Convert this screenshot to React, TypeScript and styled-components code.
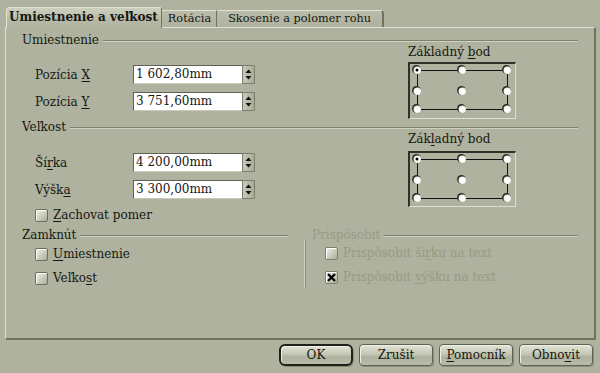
import React from "react";
import styled, { createGlobalStyle } from "styled-components";

const Global = createGlobalStyle`
  html, body { margin: 0; padding: 0; background: #aeb29e; }
  body { font-family: "DejaVu Serif", "Liberation Serif", serif; font-size: 12px; color: #161712; }
  * { box-sizing: border-box; }
`;

const Window = styled.div`
  width: 600px;
  height: 373px;
  padding: 7px 4px 0 5px;
  display: flex;
  flex-direction: column;
  background: #aeb29e;
`;

const TabBar = styled.div`
  display: flex;
  align-items: flex-end;
  height: 20px;
  padding-left: 1px;
  position: relative;
  z-index: 2;
`;

const Tab = styled.div<{ $active?: boolean; $last?: boolean }>`
  height: ${(p) => (p.$active ? 21 : 17)}px;
  margin-bottom: ${(p) => (p.$active ? -1 : 0)}px;
  padding: ${(p) => (p.$active ? "0 3px 0 2px" : p.$last ? "0 11px 0 10px" : "0 5px 0 5px")};
  display: flex;
  align-items: center;
  padding-bottom: ${(p) => (p.$active ? 3 : 1)}px;
  font-weight: ${(p) => (p.$active ? "bold" : "normal")};
  font-size: ${(p) => (p.$active ? 12 : 11.3)}px;
  white-space: nowrap;
  background: ${(p) =>
    p.$active ? "linear-gradient(#cdd0be, #b6baa6 60%, #aeb29e)" : "linear-gradient(#b9bca9, #aeb29e)"};
  border-top: 1px solid #dfe2d2;
  border-left: 1px solid ${(p) => (p.$active ? "#e2e5d6" : "transparent")};
  border-right: ${(p) => (p.$last ? 2 : 1)}px solid #6f735f;
  border-radius: ${(p) => (p.$active ? "4px 2px 0 0" : p.$last ? "0 4px 0 0" : "0")};
`;

const Panel = styled.div`
  height: 313px;
  border-top: 1px solid #dfe2d2;
  border-left: 1px solid #dfe2d2;
  border-right: 2px solid #6e725e;
  border-bottom: 2px solid #6e725e;
  padding: 6px 16px 0 16px;
  display: flex;
  flex-direction: column;
`;

const Header = styled.div<{ $disabled?: boolean; $gapRight?: number }>`
  display: flex;
  align-items: center;
  height: 12px;
  line-height: 12px;
  gap: 4px;
  margin-right: ${(p) => p.$gapRight ?? 0}px;
  color: ${(p) => (p.$disabled ? "#979b86" : "inherit")};
`;

const Rule = styled.div`
  flex: 1;
  height: 2px;
  border-top: 1px solid #7e826e;
  border-bottom: 1px solid #cfd2c0;
  margin-top: 1px;
`;

const Body = styled.div<{ $pb?: number }>`
  display: grid;
  grid-template-columns: 386px 110px;
  padding-bottom: ${(p) => p.$pb ?? 0}px;
`;

const Fields = styled.div<{ $pt: number }>`
  padding: ${(p) => p.$pt}px 0 0 13px;
  display: flex;
  flex-direction: column;
  gap: 8px;
`;

const FieldRow = styled.div`
  display: grid;
  grid-template-columns: 98px 122px;
  align-items: center;
  height: 19px;
`;

const InputWrap = styled.div`
  display: flex;
  height: 19px;
`;

const TextInput = styled.div`
  width: 109px;
  height: 19px;
  background: #ffffff;
  border-top: 1px solid #5e6252;
  border-left: 1px solid #5e6252;
  border-bottom: 1px solid #c8ccb8;
  padding: 0 0 0 2px;
  line-height: 17px;
  white-space: nowrap;
`;

const Spin = styled.div`
  width: 13px;
  height: 19px;
  background: linear-gradient(90deg, #c6c9b6, #a8ac96);
  border: 1px solid #7a7e6a;
  display: flex;
  align-items: center;
  justify-content: center;
`;

const BaseCol = styled.div<{ $gap: number }>`
  display: flex;
  flex-direction: column;
  gap: ${(p) => p.$gap}px;
`;

const BaseLabel = styled.div`
  height: 12px;
  line-height: 12px;
`;

const BaseBox = styled.div<{ $h: number }>`
  width: 108px;
  height: ${(p) => p.$h}px;
  border-top: 2px solid #2e3128;
  border-left: 2px solid #2e3128;
  border-right: 1px solid #dde0d0;
  border-bottom: 1px solid #dde0d0;
  display: flex;
`;

const CheckRow = styled.label<{ $disabled?: boolean }>`
  display: flex;
  align-items: center;
  gap: 5px;
  height: 16px;
  color: ${(p) => (p.$disabled ? "#979b86" : "inherit")};
`;

const Box = styled.span<{ $disabled?: boolean }>`
  width: 13px;
  height: 13px;
  display: inline-flex;
  align-items: center;
  justify-content: center;
  border: 1px solid ${(p) => (p.$disabled ? "#7c806c" : "#6a6e5a")};
  border-radius: 2px;
  background: linear-gradient(135deg, #eef0e6, #c6c9b6 60%, #a9ad98);
  box-shadow: inset 1px 1px 0 #ffffff;
`;

const LockSection = styled.div`
  display: grid;
  grid-template-columns: 283px 1fr;
  margin-top: 6px;
`;

const LockCol = styled.div`
  display: flex;
  flex-direction: column;
`;

const FitHeaderWrap = styled.div`
  padding-left: 7px;
`;

const CheckList = styled.div<{ $sep?: boolean }>`
  display: flex;
  flex-direction: column;
  gap: 8px;
  padding: 5px 0 3px ${(p) => (p.$sep ? 19 : 13)}px;
  border-left: ${(p) => (p.$sep ? "1px solid #8d917d" : "none")};
  box-shadow: ${(p) => (p.$sep ? "-1px 0 0 #c9ccba" : "none")};
  margin-top: ${(p) => (p.$sep ? -1 : 0)}px;
`;

const KeepRow = styled.div`
  padding: 0 0 0 13px;
`;

const ButtonRow = styled.div`
  display: flex;
  justify-content: flex-end;
  gap: 6px;
  margin-top: 4px;
  padding-right: 3px;
`;

const Button = styled.button<{ $default?: boolean }>`
  width: 74px;
  height: 22px;
  font-family: inherit;
  font-size: 12px;
  color: #161712;
  padding: 0;
  border: ${(p) => (p.$default ? "2px solid #1f211a" : "1px solid #5f6353")};
  border-radius: ${(p) => (p.$default ? 6 : 4)}px;
  background: linear-gradient(#e2e4d8, #c4c7b4 45%, #aeb29e 60%, #b8bba8);
  box-shadow: inset 1px 1px 0 #eef0e6, 1px 1px 0 #8a8e7a;
`;

const U = styled.span`
  text-decoration: underline;
  text-underline-offset: 2px;
`;

const Label = styled.span``;

function SpinArrows() {
  return (
    <svg width="7" height="11" viewBox="0 0 7 11">
      <path d="M3.5 0.5 L6.5 4 L0.5 4 Z" fill="#111" />
      <path d="M0.5 7 L6.5 7 L3.5 10.5 Z" fill="#111" />
    </svg>
  );
}

function Field({ label, value }: { label: React.ReactNode; value: string }) {
  return (
    <FieldRow>
      <Label>{label}</Label>
      <InputWrap>
        <TextInput>{value}</TextInput>
        <Spin>
          <SpinArrows />
        </Spin>
      </InputWrap>
    </FieldRow>
  );
}

function BasePoint({ label, h, rows, gap }: { label: React.ReactNode; h: number; rows: number[]; gap: number }) {
  const xs = [7, 52, 97];
  const w = 105;
  const hh = h - 3;
  const dot = (x: number, y: number, sel: boolean, k: string) => (
    <g key={k}>
      <circle cx={x - 0.6} cy={y - 0.6} r={4.3} fill="#2a2c24" />
      <circle cx={x + 0.3} cy={y + 0.3} r={3.7} fill="#f4f4ee" />
      <circle cx={x + 0.6} cy={y + 0.6} r={2.6} fill="#ffffff" />
      {sel && <circle cx={x} cy={y} r={1.5} fill="#000" />}
    </g>
  );
  return (
    <BaseCol $gap={gap}>
      <BaseLabel>{label}</BaseLabel>
      <BaseBox $h={h}>
        <svg width={w} height={hh} viewBox={`0 0 ${w} ${hh}`}>
          <path
            d={`M${xs[0]} ${rows[0]} H${xs[2]} V${rows[2]} H${xs[0]} Z`}
            stroke="#111"
            strokeWidth="1"
            fill="none"
            shapeRendering="crispEdges"
          />
          {rows.map((y, ri) => xs.map((x, ci) => dot(x, y, ri === 0 && ci === 0, `${ri}-${ci}`)))}
        </svg>
      </BaseBox>
    </BaseCol>
  );
}

function Check({ children, checked, disabled }: { children: React.ReactNode; checked?: boolean; disabled?: boolean }) {
  return (
    <CheckRow $disabled={disabled}>
      <Box $disabled={disabled}>
        {checked && (
          <svg width="9" height="9" viewBox="0 0 9 9">
            <path d="M1 1 L8 8 M8 1 L1 8" stroke="#000" strokeWidth="2.2" />
          </svg>
        )}
      </Box>
      <span>{children}</span>
    </CheckRow>
  );
}

export default function App() {
  return (
    <>
      <Global />
      <Window>
        <TabBar>
          <Tab $active>Umiestnenie a veľkost</Tab>
          <Tab>Rotácia</Tab>
          <Tab $last>Skosenie a polomer rohu</Tab>
        </TabBar>
        <Panel>
          <Header>
            Umiestnenie
            <Rule />
          </Header>
          <Body $pb={2}>
            <Fields $pt={19}>
              <Field label={<>Pozícia <U>X</U></>} value="1 602,80mm" />
              <Field label={<>Pozícia <U>Y</U></>} value="3 751,60mm" />
            </Fields>
            <BasePoint label={<>Základný <U>b</U>od</>} h={57} rows={[6, 27, 45]} gap={4} />
          </Body>
          <Header>
            Veľkost
            <Rule />
          </Header>
          <Body>
            <Fields $pt={20}>
              <Field label={<>Ší<U>r</U>ka</>} value="4 200,00mm" />
              <Field label={<>Výšk<U>a</U></>} value="3 300,00mm" />
            </Fields>
            <BasePoint label={<>Zák<U>l</U>adný bod</>} h={56} rows={[6, 27, 45]} gap={6} />
          </Body>
          <KeepRow>
            <Check>
              <U>Z</U>achovat pomer
            </Check>
          </KeepRow>
          <LockSection>
            <LockCol>
              <Header $gapRight={17}>
                Zamknút
                <Rule />
              </Header>
              <CheckList>
                <Check>
                  <U>U</U>miestnenie
                </Check>
                <Check>
                  Veľko<U>s</U>t
                </Check>
              </CheckList>
            </LockCol>
            <LockCol>
              <FitHeaderWrap>
                <Header $disabled>
                  Prispôsobit
                  <Rule />
                </Header>
              </FitHeaderWrap>
              <CheckList $sep>
                <Check disabled>
                  Prispôsobit ši<U>r</U>ku na text
                </Check>
                <Check disabled checked>
                  Prispôsobit <U>v</U>ýšku na text
                </Check>
              </CheckList>
            </LockCol>
          </LockSection>
        </Panel>
        <ButtonRow>
          <Button $default>OK</Button>
          <Button>Zrušit</Button>
          <Button>
            <U>P</U>omocník
          </Button>
          <Button>
            Obno<U>v</U>it
          </Button>
        </ButtonRow>
      </Window>
    </>
  );
}
